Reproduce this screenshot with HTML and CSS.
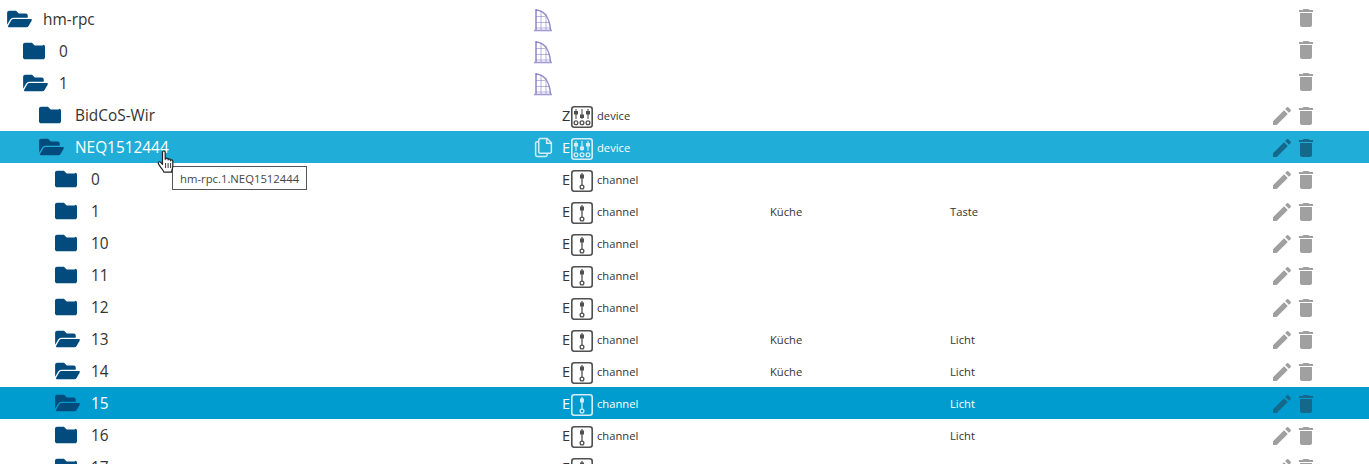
FILE: index.html
```html
<!DOCTYPE html>
<html lang="de">
<head>
<meta charset="utf-8">
<title>Objects</title>
<link rel="stylesheet" href="styles.css">
</head>
<body>
<svg class="defs" aria-hidden="true">
  <symbol id="folder" viewBox="0 0 512 512"><path d="M464 128H272l-64-64H48C21.49 64 0 85.49 0 112v288c0 26.51 21.49 48 48 48h416c26.51 0 48-21.49 48-48V160c0-26.51-21.49-48-48-48z"/></symbol>
  <symbol id="open" viewBox="0 0 576 512"><path d="M572.694 292.093L500.27 416.248A63.997 63.997 0 0 1 444.989 448H45.025c-18.523 0-30.064-20.093-20.731-36.093l72.424-124.155A64 64 0 0 1 152 256h399.964c18.523 0 30.064 20.093 20.73 36.093zM152 224h328v-48c0-26.51-21.49-48-48-48H272l-64-64H48C21.49 64 0 85.49 0 112v278.046l69.077-118.418C86.214 242.25 117.989 224 152 224z"/></symbol>
  <symbol id="edit" viewBox="0 0 24 24"><path d="M3 17.25V21h3.75L17.81 9.94l-3.75-3.75L3 17.25zM20.71 7.04c.39-.39.39-1.02 0-1.41l-2.34-2.34a.9959.9959 0 0 0-1.41 0l-1.83 1.83 3.75 3.75 1.83-1.83z"/></symbol>
  <symbol id="trash" viewBox="0 0 24 24"><path d="M6 19c0 1.1.9 2 2 2h8c1.1 0 2-.9 2-2V7H6v12zM19 4h-3.5l-1-1h-5l-1 1H5v2h14V4z"/></symbol>
  <symbol id="copy" viewBox="0 0 20 20"><path d="M7 1.500h6.500l4 4V14a1.500 1.500 0 0 1-1.500 1.500H7A1.500 1.500 0 0 1 5.500 14V3A1.500 1.500 0 0 1 7 1.500zM13 1.500V6h4.500M5.500 4.500H4A1.500 1.500 0 0 0 2.500 6v11A1.500 1.500 0 0 0 4 18.500h8a1.500 1.500 0 0 0 1.500-1.500v-1.500" fill="none" stroke="currentColor" stroke-width="1.400"/></symbol>
  <symbol id="dome" viewBox="0 0 20 25">
    <g fill="none" stroke="#4438a6">
      <path d="M3 23V2" stroke-width="1.500" opacity=".85"/>
      <path d="M3 3c7 .5 13.500 6 14.500 20" stroke-width="1.500" opacity=".8"/>
      <path d="M1 23.500h18" stroke-width="1.600" opacity=".7"/>
      <path d="M3 21h14M3 15.500h13.500M3 9.500h9" stroke-width="1.200" opacity=".5"/>
      <path d="M8 23V4M13 23V6.500" stroke-width="1.200" opacity=".45"/>
    </g>
  </symbol>
  <symbol id="device" viewBox="0 0 22 22">
    <rect x=".8" y=".8" width="20.400" height="20.400" rx="2.500" fill="none" stroke="currentColor" stroke-width="1.600"/>
    <path d="M5 3v10M11 3v10M17 3v10" stroke="currentColor" stroke-width="1.100"/>
    <path d="M3 5h4v3.500H3zM9 8.500h4V12H9zM15 5h4v3.500h-4z" fill="currentColor"/>
    <g fill="none" stroke="currentColor" stroke-width="1.300"><circle cx="5" cy="16.800" r="1.900"/><circle cx="11" cy="16.800" r="1.900"/><circle cx="17" cy="16.800" r="1.900"/></g>
  </symbol>
  <symbol id="channel" viewBox="0 0 22 22">
    <rect x=".8" y=".8" width="20.400" height="20.400" rx="2.500" fill="none" stroke="currentColor" stroke-width="1.600"/>
    <path d="M11 3v12" stroke="currentColor" stroke-width="1.300"/>
    <path d="M9 4.500h4v4H9z" fill="currentColor"/>
    <circle cx="11" cy="17" r="1.900" fill="none" stroke="currentColor" stroke-width="1.300"/>
  </symbol>
</svg>

<main class="tree">
  <div class="row">
    <div class="name lvl-0"></div>
    <div class="copy"></div>
    <div class="role"><svg class="dome"><use href="#dome"/></svg></div>
    <div class="room"></div><div class="func"></div>
    <div class="actions top"><span class="edit-slot"></span><svg class="act"><use href="#trash"/></svg></div>
  </div>

  <div class="row">
    <div class="name lvl-0"><svg class="fo"><use href="#open"/></svg><span>hm-rpc</span></div>
    <div class="copy"></div>
    <div class="role"><svg class="dome"><use href="#dome"/></svg></div>
    <div class="room"></div><div class="func"></div>
    <div class="actions top"><span class="edit-slot"></span><svg class="act"><use href="#trash"/></svg></div>
  </div>

  <div class="row">
    <div class="name lvl-1"><svg class="fc"><use href="#folder"/></svg><span>0</span></div>
    <div class="copy"></div>
    <div class="role"><svg class="dome"><use href="#dome"/></svg></div>
    <div class="room"></div><div class="func"></div>
    <div class="actions top"><span class="edit-slot"></span><svg class="act"><use href="#trash"/></svg></div>
  </div>

  <div class="row">
    <div class="name lvl-1"><svg class="fo"><use href="#open"/></svg><span>1</span></div>
    <div class="copy"></div>
    <div class="role"><svg class="dome"><use href="#dome"/></svg></div>
    <div class="room"></div><div class="func"></div>
    <div class="actions top"><span class="edit-slot"></span><svg class="act"><use href="#trash"/></svg></div>
  </div>

  <div class="row">
    <div class="name lvl-2"><svg class="fc"><use href="#folder"/></svg><span>BidCoS-Wir</span></div>
    <div class="copy"></div>
    <div class="role"><span class="letter">Z</span><svg class="type"><use href="#device"/></svg><span>device</span></div>
    <div class="room"></div><div class="func"></div>
    <div class="actions"><svg class="act"><use href="#edit"/></svg><svg class="act"><use href="#trash"/></svg></div>
  </div>

  <div class="row hover">
    <div class="name lvl-2"><svg class="fo"><use href="#open"/></svg><span>NEQ1512444</span></div>
    <div class="copy"><svg class="copy-icon"><use href="#copy"/></svg></div>
    <div class="role"><span class="letter">E</span><svg class="type"><use href="#device"/></svg><span>device</span></div>
    <div class="room"></div><div class="func"></div>
    <div class="actions"><svg class="act"><use href="#edit"/></svg><svg class="act"><use href="#trash"/></svg></div>
    <div class="tooltip">hm-rpc.1.NEQ1512444</div>
    <svg class="cursor" viewBox="0 0 18 25"><path d="M5.500 2.200c0-1.600 2.700-1.600 2.700 0v7l.4 0c0-1.500 2.500-1.500 2.500 0v.8c0-1.400 2.400-1.400 2.400 0v.8c0-1.300 2.300-1.300 2.300.2v5c0 2.500-.8 3-1.200 6.200H6.800c-.6-2.200-2-3.200-3.600-5.600-1.100-1.700-2-2.800-2-3.700 0-1.400 1.700-1.500 2.800-.3l1.500 1.700z" fill="#fff" stroke="#222" stroke-width="1.200" stroke-linejoin="round"/><path d="M8.600 13v5M11.100 13v5M13.600 13v5" stroke="#222" stroke-width=".9"/></svg>
  </div>

  <div class="row">
    <div class="name lvl-3"><svg class="fc"><use href="#folder"/></svg><span>0</span></div>
    <div class="copy"></div>
    <div class="role"><span class="letter">E</span><svg class="type"><use href="#channel"/></svg><span>channel</span></div>
    <div class="room"></div><div class="func"></div>
    <div class="actions"><svg class="act"><use href="#edit"/></svg><svg class="act"><use href="#trash"/></svg></div>
  </div>

  <div class="row">
    <div class="name lvl-3"><svg class="fc"><use href="#folder"/></svg><span>1</span></div>
    <div class="copy"></div>
    <div class="role"><span class="letter">E</span><svg class="type"><use href="#channel"/></svg><span>channel</span></div>
    <div class="room">Küche</div><div class="func">Taste</div>
    <div class="actions"><svg class="act"><use href="#edit"/></svg><svg class="act"><use href="#trash"/></svg></div>
  </div>

  <div class="row">
    <div class="name lvl-3"><svg class="fc"><use href="#folder"/></svg><span>10</span></div>
    <div class="copy"></div>
    <div class="role"><span class="letter">E</span><svg class="type"><use href="#channel"/></svg><span>channel</span></div>
    <div class="room"></div><div class="func"></div>
    <div class="actions"><svg class="act"><use href="#edit"/></svg><svg class="act"><use href="#trash"/></svg></div>
  </div>

  <div class="row">
    <div class="name lvl-3"><svg class="fc"><use href="#folder"/></svg><span>11</span></div>
    <div class="copy"></div>
    <div class="role"><span class="letter">E</span><svg class="type"><use href="#channel"/></svg><span>channel</span></div>
    <div class="room"></div><div class="func"></div>
    <div class="actions"><svg class="act"><use href="#edit"/></svg><svg class="act"><use href="#trash"/></svg></div>
  </div>

  <div class="row">
    <div class="name lvl-3"><svg class="fc"><use href="#folder"/></svg><span>12</span></div>
    <div class="copy"></div>
    <div class="role"><span class="letter">E</span><svg class="type"><use href="#channel"/></svg><span>channel</span></div>
    <div class="room"></div><div class="func"></div>
    <div class="actions"><svg class="act"><use href="#edit"/></svg><svg class="act"><use href="#trash"/></svg></div>
  </div>

  <div class="row">
    <div class="name lvl-3"><svg class="fo"><use href="#open"/></svg><span>13</span></div>
    <div class="copy"></div>
    <div class="role"><span class="letter">E</span><svg class="type"><use href="#channel"/></svg><span>channel</span></div>
    <div class="room">Küche</div><div class="func">Licht</div>
    <div class="actions"><svg class="act"><use href="#edit"/></svg><svg class="act"><use href="#trash"/></svg></div>
  </div>

  <div class="row">
    <div class="name lvl-3"><svg class="fo"><use href="#open"/></svg><span>14</span></div>
    <div class="copy"></div>
    <div class="role"><span class="letter">E</span><svg class="type"><use href="#channel"/></svg><span>channel</span></div>
    <div class="room">Küche</div><div class="func">Licht</div>
    <div class="actions"><svg class="act"><use href="#edit"/></svg><svg class="act"><use href="#trash"/></svg></div>
  </div>

  <div class="row selected">
    <div class="name lvl-3"><svg class="fo"><use href="#open"/></svg><span>15</span></div>
    <div class="copy"></div>
    <div class="role"><span class="letter">E</span><svg class="type"><use href="#channel"/></svg><span>channel</span></div>
    <div class="room"></div><div class="func">Licht</div>
    <div class="actions"><svg class="act"><use href="#edit"/></svg><svg class="act"><use href="#trash"/></svg></div>
  </div>

  <div class="row">
    <div class="name lvl-3"><svg class="fc"><use href="#folder"/></svg><span>16</span></div>
    <div class="copy"></div>
    <div class="role"><span class="letter">E</span><svg class="type"><use href="#channel"/></svg><span>channel</span></div>
    <div class="room"></div><div class="func">Licht</div>
    <div class="actions"><svg class="act"><use href="#edit"/></svg><svg class="act"><use href="#trash"/></svg></div>
  </div>

  <div class="row">
    <div class="name lvl-3"><svg class="fc"><use href="#folder"/></svg><span>17</span></div>
    <div class="copy"></div>
    <div class="role"><span class="letter">E</span><svg class="type"><use href="#channel"/></svg><span>channel</span></div>
    <div class="room"></div><div class="func">Licht</div>
    <div class="actions"><svg class="act"><use href="#edit"/></svg><svg class="act"><use href="#trash"/></svg></div>
  </div>
</main>
</body>
</html>
```
FILE: styles.css
```css
* { box-sizing: border-box; }
html, body { margin: 0; height: 100%; overflow: hidden; background: #fff; }
body { font-family: "Open Sans", "Noto Sans", sans-serif; color: #333; }
.defs { display: none; }
.tree { margin-top: -29px; }
.row {
  position: relative;
  display: grid;
  grid-template-columns: 533px 29px 208px 180px 1fr 99px;
  height: 32px;
  align-items: center;
  font-size: 11.200px;
}
.name { display: flex; align-items: center; font-size: 15.400px; }
.lvl-0 { padding-left: 7px; }
.lvl-1 { padding-left: 23px; }
.lvl-2 { padding-left: 39px; }
.lvl-3 { padding-left: 55px; }
.fc, .fo { height: 22px; fill: #024b7c; flex: none; }
.fc { width: 22px; margin-right: 14px; }
.fo { width: 25px; margin-right: 11px; }
.copy { display: flex; align-items: center; }
.copy-icon { width: 21px; height: 21px; color: #d4eef7; }
.role { display: flex; align-items: center; }
.letter { width: 9px; font-size: 14.500px; }
.type { width: 22px; height: 22px; margin: 3px 4px 0 0; color: #505050; flex: none; }
.dome { width: 20px; height: 25px; margin: 1px 0 0 -29px; flex: none; filter: blur(.5px); opacity: .72; }
.actions { display: flex; align-items: center; padding-top: 2px; }
.actions.top { padding: 0 0 2px; }
.act { width: 24px; height: 24px; fill: #a0a0a0; flex: none; }
.edit-slot { width: 24px; flex: none; }
.hover { background: #20aed8; color: #fff; }
.selected { background: #009ccf; color: #fff; }
.hover .type, .selected .type { color: #d4eef7; }
.hover .act, .selected .act { fill: #14688a; }
.tooltip {
  position: absolute;
  left: 172px;
  top: 35px;
  height: 24px;
  padding: 0 7px;
  display: flex;
  align-items: center;
  background: #fff;
  border: 1px solid #555;
  color: #444;
  font-size: 11.300px;
  white-space: nowrap;
  z-index: 2;
}
.cursor { position: absolute; left: 157px; top: 19px; width: 18px; height: 25px; z-index: 3; }
```
